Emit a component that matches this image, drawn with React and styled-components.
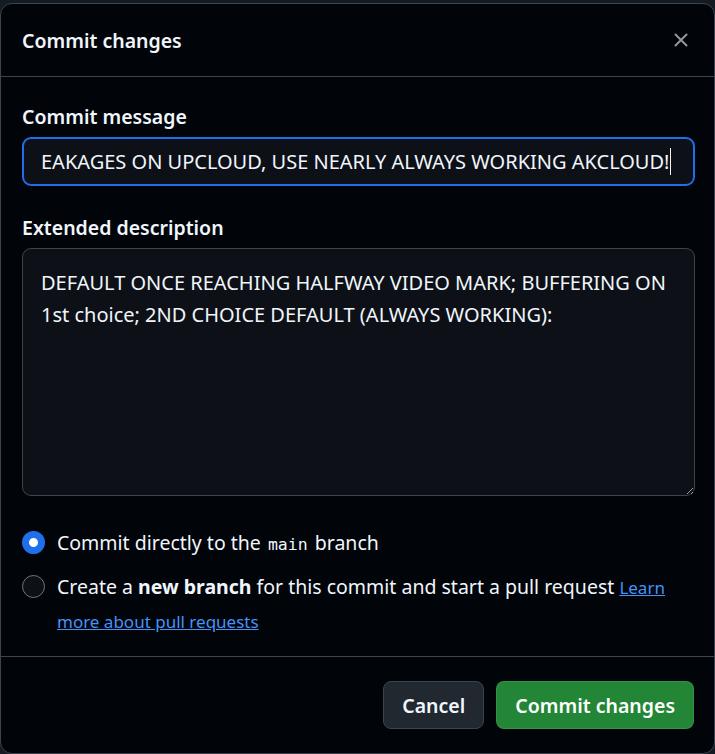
import styled, { createGlobalStyle } from "styled-components"

const GlobalStyle = createGlobalStyle`
  html, body {
    margin: 0;
    padding: 0;
    background: #151b23;
    height: 100%;
    overflow: hidden;
  }
  body {
    font-family: "Noto Sans", "Open Sans", sans-serif;
    color: #f0f6fc;
  }
`

const Page = styled.div`
  padding-top: 3px;
  height: 754px;
  box-sizing: border-box;
`

const Dialog = styled.div`
  width: 715px;
  height: 751px;
  box-sizing: border-box;
  background: #010409;
  border: 1px solid #3d444d;
  border-radius: 12px;
  display: flex;
  flex-direction: column;
  overflow: hidden;
`

const Header = styled.div`
  height: 73px;
  box-sizing: border-box;
  display: flex;
  align-items: center;
  justify-content: space-between;
  padding: 0 21px 0 21px;
  border-bottom: 1px solid #3d444d;
`

const Title = styled.h1`
  margin: 0;
  font-size: 19.5px;
  font-weight: 600;
  color: #f0f6fc;
`

const CloseButton = styled.button`
  background: none;
  border: 0;
  padding: 0;
  width: 24px;
  height: 24px;
  display: flex;
  align-items: center;
  justify-content: center;
  color: #9198a1;
  cursor: pointer;
`

const Body = styled.div`
  flex: 1;
  padding: 25px 19px 0 21px;
  display: flex;
  flex-direction: column;
`

const Label = styled.label`
  display: block;
  font-size: 19.5px;
  font-weight: 600;
  color: #f0f6fc;
  line-height: 30px;
  margin-bottom: 5px;
`

const Field = styled.div`
  height: 49px;
  box-sizing: border-box;
  border: 2px solid #1f6feb;
  border-radius: 9px;
  background: #0d1117;
  display: flex;
  align-items: center;
  padding: 0 17px;
  font-size: 20px;
  white-space: nowrap;
  overflow: hidden;
  margin-bottom: 27px;
`

const Caret = styled.span`
  display: inline-block;
  width: 1px;
  height: 27px;
  background: #f0f6fc;
  margin-left: 1px;
`

const TextArea = styled.textarea`
  display: block;
  width: 100%;
  height: 248px;
  box-sizing: border-box;
  background: #0d1117;
  border: 1px solid #3d444d;
  border-radius: 9px;
  color: #f0f6fc;
  font-family: "Noto Sans", "Open Sans", sans-serif;
  font-size: 20px;
  line-height: 32px;
  padding: 18px 17px 18px 18px;
  resize: vertical;
  outline: none;
  color-scheme: dark;
`

const Options = styled.div`
  margin-top: 30px;
  display: flex;
  flex-direction: column;
  gap: 9px;
`

const Option = styled.label`
  display: flex;
  align-items: flex-start;
  gap: 12px;
  font-size: 19.5px;
  line-height: 33px;
  color: #f0f6fc;
`

const Radio = styled.span`
  flex: none;
  width: 23px;
  height: 23px;
  box-sizing: border-box;
  border-radius: 50%;
  margin-top: 5px;
  border: ${p => (p.$checked ? "7px solid #1f6feb" : "1px solid #6e7681")};
  background: ${p => (p.$checked ? "#ffffff" : "#0d1117")};
`

const Code = styled.code`
  font-family: "DejaVu Sans Mono", "Liberation Mono", monospace;
  font-size: 16.5px;
  margin: 0 2px;
`

const Link = styled.a`
  color: #4493f8;
  text-decoration: underline;
  font-size: 17px;
`

const Footer = styled.div`
  border-top: 1px solid #3d444d;
  height: 97px;
  box-sizing: border-box;
  display: flex;
  align-items: center;
  justify-content: flex-end;
  gap: 12px;
  padding: 0 20px 0 0;
`

const Button = styled.button`
  height: 48px;
  box-sizing: border-box;
  border-radius: 8px;
  font-family: "Noto Sans", "Open Sans", sans-serif;
  font-size: 19.5px;
  font-weight: 600;
  padding: 0 18px;
  color: ${p => (p.$primary ? "#ffffff" : "#f0f6fc")};
  background: ${p => (p.$primary ? "#238636" : "#212830")};
  border: 1px solid ${p => (p.$primary ? "rgba(240,246,252,0.1)" : "#3d444d")};
  cursor: pointer;
`

const CloseIcon = () => (
  <svg width="14" height="14" viewBox="0 0 14 14" fill="none">
    <path d="M1.5 1.5l11 11M12.5 1.5l-11 11" stroke="currentColor" strokeWidth="2" strokeLinecap="round" />
  </svg>
)

const App = () => {
  return (
    <Page>
      <GlobalStyle />
      <Dialog>
        <Header>
          <Title>Commit changes</Title>
          <CloseButton aria-label="Close"><CloseIcon /></CloseButton>
        </Header>
        <Body>
          <Label>Commit message</Label>
          <Field>
            EAKAGES ON UPCLOUD, USE NEARLY ALWAYS WORKING AKCLOUD!<Caret />
          </Field>
          <Label>Extended description</Label>
          <TextArea
            readOnly
            defaultValue={"DEFAULT ONCE REACHING HALFWAY VIDEO MARK; BUFFERING ON\n1st choice; 2ND CHOICE DEFAULT (ALWAYS WORKING):"}
          />
          <Options>
            <Option>
              <Radio $checked />
              <span>Commit directly to the <Code>main</Code> branch</span>
            </Option>
            <Option>
              <Radio />
              <span>
                Create a <b>new branch</b> for this commit and start a pull request{" "}
                <Link href="#">Learn more about pull requests</Link>
              </span>
            </Option>
          </Options>
        </Body>
        <Footer>
          <Button>Cancel</Button>
          <Button $primary>Commit changes</Button>
        </Footer>
      </Dialog>
    </Page>
  )
}

export default App
